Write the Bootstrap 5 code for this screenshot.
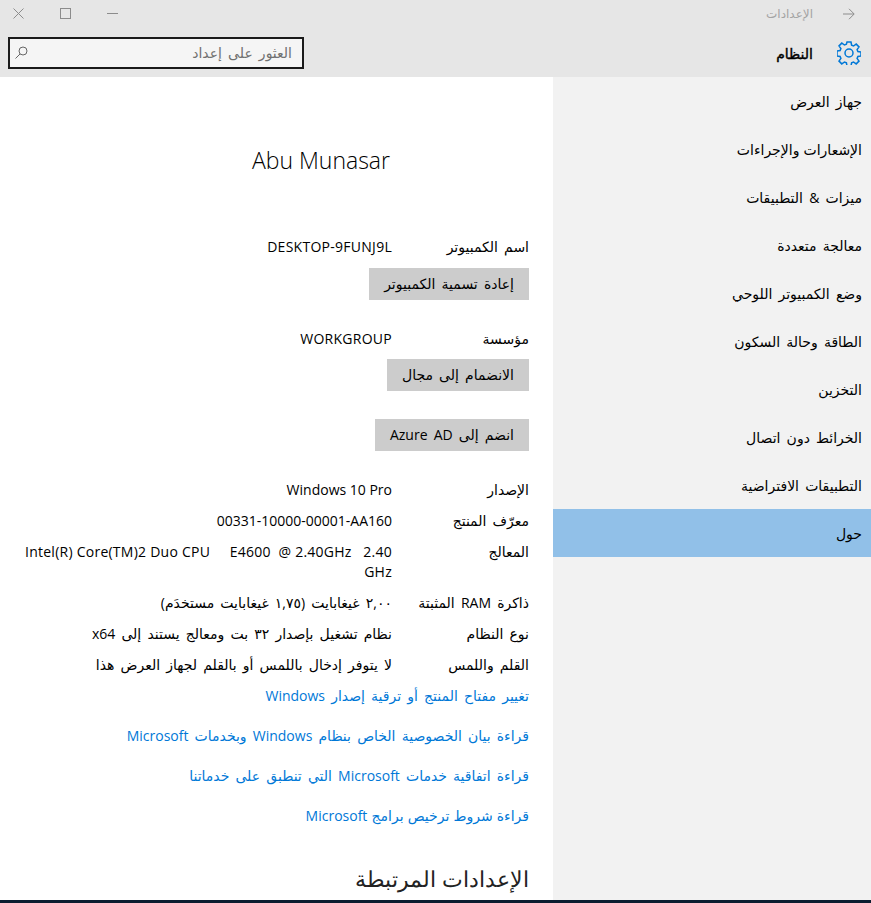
<!DOCTYPE html>
<html lang="ar" dir="rtl">
<head>
<meta charset="utf-8">
<title>الإعدادات</title>
<link href="https://cdn.jsdelivr.net/npm/bootstrap@5.3.0/dist/css/bootstrap.min.css" rel="stylesheet">
<style>
html,body{height:100%;}
body{width:871px;height:903px;overflow:hidden;background:#fff;color:#000;font-family:"Open Sans","DejaVu Sans",sans-serif;font-size:14px;line-height:20px;word-spacing:2.5px;}
.win{height:900px;overflow:hidden;}
.topbar{height:77px;background:#e6e6e6;}
.titlerow{height:27px;padding:0 16px 0 13px;}
.titletext{font-size:12px;color:#a3a3a3;margin-right:30px;word-spacing:0;}
.ctrls{gap:36px;direction:ltr;}
.sysrow{height:50px;padding:0 10px 0 8px;}
.gearicon{margin-top:2px;}
.systitle{font-size:14px;font-weight:400;-webkit-text-stroke:.4px #000;margin-right:24px;margin-top:3px;word-spacing:0;}
.searchbox{width:296px;height:32px;margin-top:1px;border:2px solid #1a1a1a;background:#f5f5f5;padding:0 10px 0 5px;font-size:14px;color:#707070;}
.mainrow{height:823px;}
.sidenav{width:318px;background:#f2f2f2;flex:none;}
.sideitem{height:48px;padding:2px 9px 0;font-size:14px;color:#000;display:flex;align-items:center;}
.sideitem.on{background:#91c0e8;padding-top:1px;}
.tight{word-spacing:.5px;}
.content{flex:1;padding:67px 24px 0 0;overflow:hidden;}
.username{font-size:23px;font-weight:300;line-height:32px;direction:ltr;text-align:right;padding-right:139px;margin-bottom:56px;word-spacing:0;}
.inforow{display:flex;align-items:flex-start;padding:5px 0 6px;line-height:20px;}
.infokey{width:137px;flex:none;}
.infoval{width:368px;}
.ltrval{direction:ltr;text-align:right;word-spacing:0;}
.capsval{letter-spacing:.27px;}
.cpuval{letter-spacing:.25px;}
.grayact{display:block;border:0;border-radius:0;background:#ccc;color:#000;font-size:14px;line-height:20px;padding:6px 15px;height:32px;word-spacing:2.5px;}
.grayact:hover,.grayact:active{background:#ccc;color:#000;}
.actwrap{display:flex;margin-top:5px;}
.actnear{display:flex;margin-top:4px;}
.actgap{display:flex;margin-top:28px;}
.grp{margin-top:24px;}
.linkset{margin-top:5px;}
.lnk{display:block;color:#0078d7;text-decoration:none;height:40px;line-height:20px;}
.lnk:hover{color:#0078d7;}
.rel{font-size:22px;line-height:32px;margin-top:16px;font-weight:300;color:#222;word-spacing:0;}
.taskline{height:3px;background:#0b1d30;}
</style>
</head>
<body>
<div class="win">
  <header class="topbar">
    <div class="titlerow d-flex align-items-center">
      <svg width="12" height="12" viewBox="0 0 12 12" fill="none" stroke="#8c8c8c"><path d="M0 6h11M6 .8L11.200 6 6 11.200"/></svg>
      <span class="titletext">الإعدادات</span>
      <div class="ctrls d-flex align-items-center ms-0 me-auto">
        <svg width="11" height="11" viewBox="0 0 11 11" fill="none" stroke="#8c8c8c"><path d="M.5.5l10 10M10.500.5l-10 10"/></svg>
        <svg width="11" height="11" viewBox="0 0 11 11" fill="none" stroke="#8c8c8c"><rect x=".5" y=".5" width="10" height="10"/></svg>
        <svg width="11" height="11" viewBox="0 0 11 11" fill="none" stroke="#8c8c8c"><path d="M0 5.500h11"/></svg>
      </div>
    </div>
    <div class="sysrow d-flex align-items-center">
      <svg class="gearicon" width="24" height="24" viewBox="0 0 24 24" fill="none" stroke="#0078d7" stroke-width="1.5"><circle cx="12" cy="12" r="4"/><path d="M10 1h4l.6 3.200 1.900.8 2.700-1.900 2.800 2.800-1.900 2.700.8 1.900 3.100.6v3.800l-3.100.6-.8 1.900 1.900 2.700-2.800 2.800-2.700-1.900-1.900.8-.6 3.200h-4l-.6-3.200-1.900-.8-2.700 1.900-2.800-2.800 1.900-2.700-.8-1.900-3.100-.6V10.100l3.100-.6.800-1.900L2 4.900l2.800-2.800 2.700 1.900 1.900-.8z"/></svg>
      <span class="systitle">النظام</span>
      <div class="searchbox d-flex align-items-center justify-content-between me-auto">
        <span>العثور على إعداد</span>
        <svg width="13" height="13" viewBox="0 0 13 13" fill="none" stroke="#666"><circle cx="8" cy="5" r="4"/><path d="M5 8l-4.500 4.500"/></svg>
      </div>
    </div>
  </header>
  <div class="mainrow d-flex">
    <nav class="sidenav">
      <div class="sideitem">جهاز العرض</div>
      <div class="sideitem tight">الإشعارات والإجراءات</div>
      <div class="sideitem">ميزات &amp; التطبيقات</div>
      <div class="sideitem">معالجة متعددة</div>
      <div class="sideitem">وضع الكمبيوتر اللوحي</div>
      <div class="sideitem">الطاقة وحالة السكون</div>
      <div class="sideitem">التخزين</div>
      <div class="sideitem">الخرائط دون اتصال</div>
      <div class="sideitem">التطبيقات الافتراضية</div>
      <div class="sideitem on">حول</div>
    </nav>
    <main class="content">
      <div class="username">Abu Munasar</div>
      <div class="inforow"><div class="infokey">اسم الكمبيوتر</div><div class="infoval ltrval capsval">DESKTOP-9FUNJ9L</div></div>
      <div class="actwrap"><button type="button" class="btn grayact">إعادة تسمية الكمبيوتر</button></div>
      <div class="inforow grp"><div class="infokey">مؤسسة</div><div class="infoval ltrval capsval">WORKGROUP</div></div>
      <div class="actnear"><button type="button" class="btn grayact">الانضمام إلى مجال</button></div>
      <div class="actgap"><button type="button" class="btn grayact">انضم إلى Azure AD</button></div>
      <div class="inforow grp"><div class="infokey">الإصدار</div><div class="infoval ltrval">Windows 10 Pro</div></div>
      <div class="inforow"><div class="infokey">معرّف المنتج</div><div class="infoval ltrval">00331-10000-00001-AA160</div></div>
      <div class="inforow"><div class="infokey">المعالج</div><div class="infoval ltrval cpuval">Intel(R) Core(TM)2 Duo CPU &nbsp;&nbsp;&nbsp;&nbsp;E4600 &nbsp;@ 2.40GHz &nbsp;&nbsp;2.40 GHz</div></div>
      <div class="inforow"><div class="infokey">ذاكرة RAM المثبتة</div><div class="infoval">٢,٠٠ غيغابايت (١,٧٥ غيغابايت مستخدَم)</div></div>
      <div class="inforow"><div class="infokey">نوع النظام</div><div class="infoval">نظام تشغيل بإصدار ٣٢ بت ومعالج يستند إلى x64</div></div>
      <div class="inforow"><div class="infokey">القلم واللمس</div><div class="infoval">لا يتوفر إدخال باللمس أو بالقلم لجهاز العرض هذا</div></div>
      <div class="linkset">
        <a class="lnk" href="#">تغيير مفتاح المنتج أو ترقية إصدار Windows</a>
        <a class="lnk" href="#">قراءة بيان الخصوصية الخاص بنظام Windows وبخدمات Microsoft</a>
        <a class="lnk" href="#">قراءة اتفاقية خدمات Microsoft التي تنطبق على خدماتنا</a>
        <a class="lnk tight" href="#">قراءة شروط ترخيص برامج Microsoft</a>
      </div>
      <div class="rel">الإعدادات المرتبطة</div>
    </main>
  </div>
</div>
<div class="taskline"></div>
<script src="https://cdn.jsdelivr.net/npm/bootstrap@5.3.0/dist/js/bootstrap.bundle.min.js"></script>
</body>
</html>
